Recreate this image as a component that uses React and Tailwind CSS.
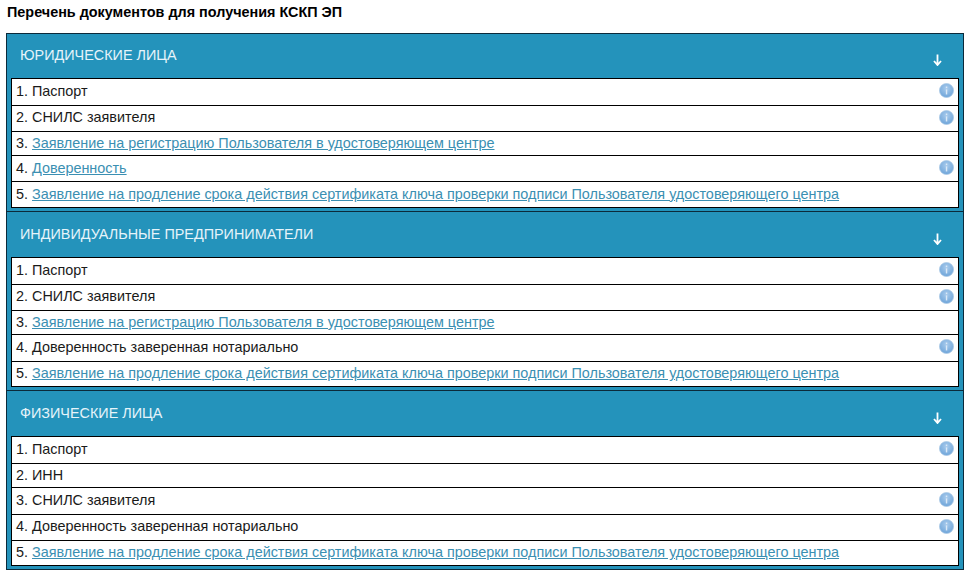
import React from "react";

const LINK_REG = "Заявление на регистрацию Пользователя в удостоверяющем центре";
const LINK_RENEW =
  "Заявление на продление срока действия сертификата ключа проверки подписи Пользователя удостоверяющего центра";

const groups = [
  {
    title: "ЮРИДИЧЕСКИЕ ЛИЦА",
    rows: [
      { text: "Паспорт", info: true, h: "h-[27px]" },
      { text: "СНИЛС заявителя", info: true, h: "h-[26px] pb-[1px]" },
      { link: LINK_REG, h: "h-[24px]" },
      { link: "Доверенность", info: true, h: "h-[26px]" },
      { link: LINK_RENEW, h: "h-[25px]" },
    ],
  },
  {
    title: "ИНДИВИДУАЛЬНЫЕ ПРЕДПРИНИМАТЕЛИ",
    rows: [
      { text: "Паспорт", info: true, h: "h-[27px]" },
      { text: "СНИЛС заявителя", info: true, h: "h-[26px] pb-[1px]" },
      { link: LINK_REG, h: "h-[24px]" },
      { text: "Доверенность заверенная нотариально", info: true, h: "h-[27px]" },
      { link: LINK_RENEW, h: "h-[24px]" },
    ],
  },
  {
    title: "ФИЗИЧЕСКИЕ ЛИЦА",
    rows: [
      { text: "Паспорт", info: true, h: "h-[27px]" },
      { text: "ИНН", h: "h-[24px]" },
      { text: "СНИЛС заявителя", info: true, h: "h-[27px]" },
      { text: "Доверенность заверенная нотариально", info: true, h: "h-[26px] pb-[1px]" },
      { link: LINK_RENEW, h: "h-[24px]" },
    ],
  },
];

function InfoIcon() {
  return (
    <svg width="15" height="15" viewBox="0 0 16 16" className="absolute right-[4px] top-[4px]">
      <defs>
        <radialGradient id="infoGrad" cx="50%" cy="35%" r="70%">
          <stop offset="0%" stopColor="#a9cbec" />
          <stop offset="100%" stopColor="#6aa2d8" />
        </radialGradient>
      </defs>
      <circle cx="8" cy="8" r="7.5" fill="url(#infoGrad)" stroke="#a9c8e6" strokeWidth="0.8" />
      <rect x="7.3" y="6.8" width="1.5" height="5.4" fill="#dbe9f7" />
      <rect x="7.3" y="3.8" width="1.5" height="1.6" fill="#dbe9f7" />
    </svg>
  );
}

function DownArrow({ first }) {
  return (
    <svg
      width="9"
      height="12"
      viewBox="0 0 9 12"
      className={`absolute right-[17px] ${first ? "top-[20px]" : "top-[21px]"}`}
    >
      <path d="M4.5 0.5v10M1 7l3.5 4L8 7" fill="none" stroke="#fff" strokeWidth="1.8" />
    </svg>
  );
}

function Row({ n, row, last }) {
  return (
    <div className={`relative flex items-center pl-[4px] ${row.h} ${last ? "" : "border-b border-black"}`}>
      <span>{n}.</span>
      {row.link ? (
        <a href="#" className="ml-[4px] text-[#3b8fb2] underline">
          {row.link}
        </a>
      ) : (
        <span className="ml-[4px]">{row.text}</span>
      )}
      {row.info && <InfoIcon />}
    </div>
  );
}

function Group({ group, first, last }) {
  return (
    <section className={`border-x border-t border-[#0b2a3a] bg-[#2493bb] px-[4px] pb-[3px] ${last ? "border-b" : ""}`}>
      <div
        className={`relative pl-[9px] text-[14.4px] leading-[20px] text-[#e6f4fa] ${
          first ? "h-[44px] pt-[11px]" : "h-[45px] pt-[12px]"
        }`}
      >
        {group.title}
        <DownArrow first={first} />
      </div>
      <div className="border border-black bg-white text-[14.4px] text-[#1a1a1a]">
        {group.rows.map((row, i) => (
          <Row key={i} n={i + 1} row={row} last={i === group.rows.length - 1} />
        ))}
      </div>
    </section>
  );
}

export default function App() {
  return (
    <div className="h-[585px] w-[974px] overflow-hidden bg-white font-['Liberation_Sans',Arial,sans-serif]">
      <h1 className="pl-[7px] pt-[4px] text-[14.4px] font-bold leading-[16px] text-black">
        Перечень документов для получения КСКП ЭП
      </h1>
      <div className="ml-[6px] mt-[13px] w-[958px]">
        {groups.map((group, i) => (
          <Group key={group.title} group={group} first={i === 0} last={i === groups.length - 1} />
        ))}
      </div>
    </div>
  );
}
